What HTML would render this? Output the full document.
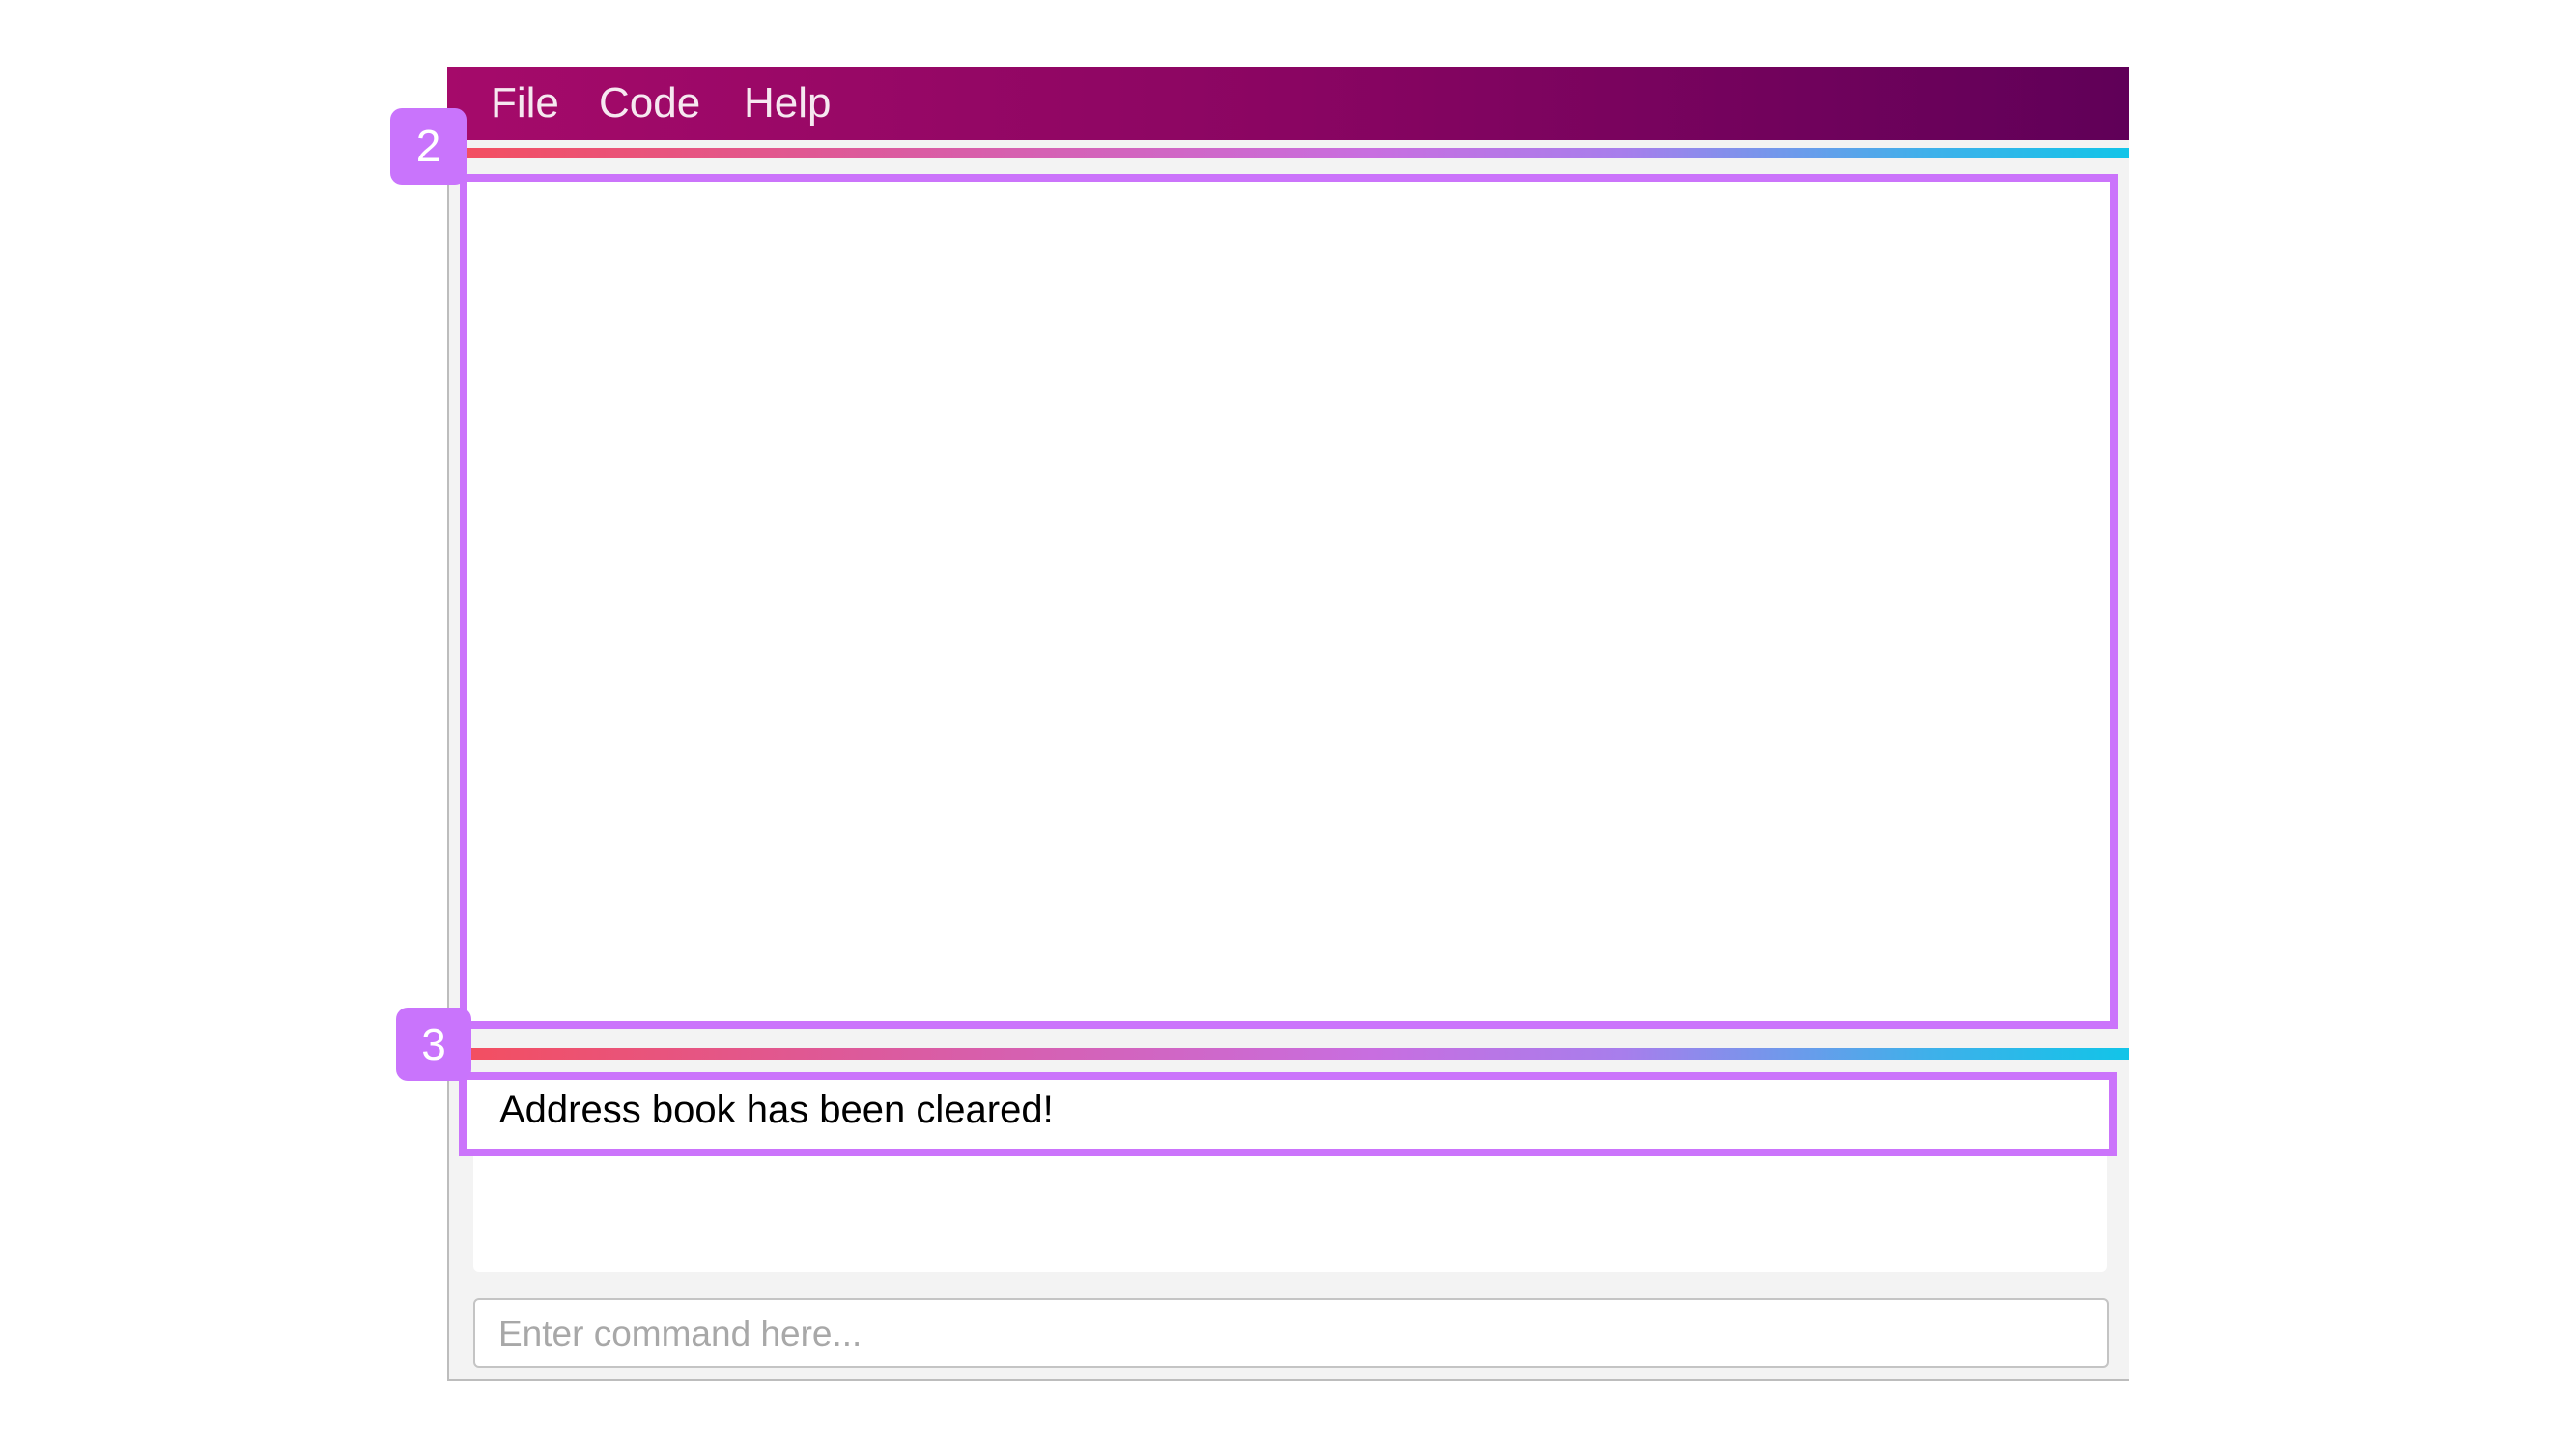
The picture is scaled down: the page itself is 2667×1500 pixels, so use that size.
<!DOCTYPE html>
<html><head><meta charset="utf-8"><style>
body{margin:0;width:2667px;height:1500px;background:#fff;position:relative;overflow:hidden;font-family:"Liberation Sans",sans-serif}
.a{position:absolute;box-sizing:border-box}
.grad{background:linear-gradient(90deg,#f44e5e 0%,#dc5a9c 25%,#c86ee0 55%,#a77eec 70%,#3fb0ea 88%,#12c4e8 100%)}
</style></head><body>
<div class="a" style="left:463px;top:69px;width:1741px;height:1361px;background:#f3f3f3;border-left:2px solid #bdbdbd;border-bottom:2px solid #bdbdbd"></div>
<div class="a" style="left:463px;top:69px;width:1741px;height:76px;background:linear-gradient(90deg,#a50a6a,#8a0562 50%,#600058)"></div>
<div class="a" style="left:508px;top:79px;color:#f6e8f0;font-size:44px;line-height:56px">File</div>
<div class="a" style="left:620px;top:79px;color:#f6e8f0;font-size:44px;line-height:56px">Code</div>
<div class="a" style="left:770px;top:79px;color:#f6e8f0;font-size:44px;line-height:56px">Help</div>
<div class="a grad" style="left:463px;top:153px;width:1741px;height:11px"></div>
<div class="a" style="left:476px;top:180px;width:1717px;height:885px;background:#fff;border:8px solid #cb74fb"></div>
<div class="a grad" style="left:463px;top:1085px;width:1741px;height:12px"></div>
<div class="a" style="left:490px;top:1197px;width:1691px;height:120px;background:#fff;border-radius:0 0 6px 6px"></div>
<div class="a" style="left:475px;top:1110px;width:1717px;height:87px;background:#fff;border:8px solid #cb74fb"></div>
<div class="a" style="left:517px;top:1124px;color:#000;font-size:40px;line-height:50px">Address book has been cleared!</div>
<div class="a" style="left:490px;top:1344px;width:1693px;height:72px;background:#fff;border:2px solid #c4c4c4;border-radius:6px"></div>
<div class="a" style="left:516px;top:1358px;color:#a8a8a8;font-size:37px;line-height:46px">Enter command here...</div>
<div class="a" style="left:404px;top:112px;width:79px;height:79px;background:#c974fc;border-radius:12px;color:#fff;font-size:46px;line-height:79px;text-align:center">2</div>
<div class="a" style="left:410px;top:1043px;width:78px;height:76px;background:#c974fc;border-radius:12px;color:#fff;font-size:46px;line-height:76px;text-align:center">3</div>
</body></html>
